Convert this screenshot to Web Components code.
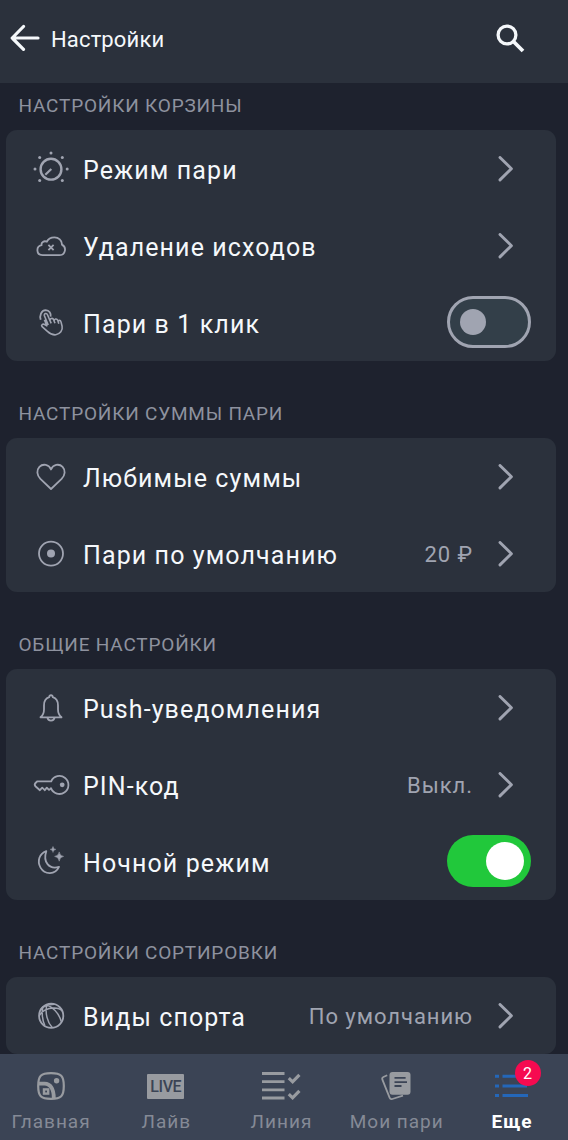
<!DOCTYPE html>
<html lang="ru">
<head>
<meta charset="utf-8">
<meta name="viewport" content="width=device-width, initial-scale=1">
<title>Настройки</title>
<style>
html, body
{
    height: 100%;
    margin: 0;
    overflow: hidden;
}

body
{
    --page: #1e222e;
    --panel: #2b313c;
    --nav: #3b4455;
    --muted: #a0a4b1;
    --heading: #8e929f;
    --white: #f5f8fb;
    --green: #21c83b;
    --red: #f60a50;
    --blue: #2467b9;
    background: var(--page);
    font-family: Roboto, "Noto Sans", sans-serif;
}
</style>
</head>
<body>

<settings-screen>
    <app-header slot="header">Настройки</app-header>

    <settings-group heading="Настройки корзины">
        <settings-row icon="mode">Режим пари<chevron-icon slot="end"></chevron-icon></settings-row>
        <settings-row icon="cloud">Удаление исходов<chevron-icon slot="end"></chevron-icon></settings-row>
        <settings-row icon="tap">Пари в 1 клик<toggle-switch slot="end"></toggle-switch></settings-row>
    </settings-group>

    <settings-group heading="Настройки суммы пари">
        <settings-row icon="heart">Любимые суммы<chevron-icon slot="end"></chevron-icon></settings-row>
        <settings-row icon="target">Пари по умолчанию<span slot="value">20 ₽</span><chevron-icon slot="end"></chevron-icon></settings-row>
    </settings-group>

    <settings-group heading="Общие настройки">
        <settings-row icon="bell">Push-уведомления<chevron-icon slot="end"></chevron-icon></settings-row>
        <settings-row icon="key">PIN-код<span slot="value">Выкл.</span><chevron-icon slot="end"></chevron-icon></settings-row>
        <settings-row icon="moon">Ночной режим<toggle-switch slot="end" on></toggle-switch></settings-row>
    </settings-group>

    <settings-group heading="Настройки сортировки">
        <settings-row icon="ball">Виды спорта<span slot="value">По умолчанию</span><chevron-icon slot="end"></chevron-icon></settings-row>
    </settings-group>

    <nav-bar slot="footer">
        <nav-item icon="home">Главная</nav-item>
        <nav-item icon="live">Лайв</nav-item>
        <nav-item icon="line">Линия</nav-item>
        <nav-item icon="bets">Мои пари</nav-item>
        <nav-item icon="more" badge="2" active>Еще</nav-item>
    </nav-bar>
</settings-screen>

<script>
// row icons share a 38x38 box
const rowIcons = {
    mode: `
        <circle cx="19" cy="19.2" r="10.4" stroke-width="2.4"/>
        <path d="M13.3 24.7 19.3 19" stroke-width="2.2"/>
        <g fill="currentColor" stroke="none">
            <circle cx="19" cy="2.9" r="1.5"/><circle cx="7.7" cy="7.6" r="1.5"/><circle cx="30.3" cy="7.6" r="1.5"/>
            <circle cx="3" cy="19" r="1.5"/><circle cx="35.2" cy="19" r="1.5"/>
            <circle cx="7.7" cy="30.4" r="1.5"/><circle cx="30.3" cy="30.4" r="1.5"/>
        </g>`,
    cloud: `
        <path d="M10.7 28.2H27.5A5.6 5.6 0 0 0 29.9 17.6C30.2 13.3 26.4 10.3 22.5 10.3C18.7 10.3 16 12 14.9 14.7C11.8 13.4 9 15.5 9.6 18.1C3.7 19.3 4 28.1 10.7 28.2Z"/>
        <path d="M16.4 17.9 21.6 23.2M21.6 17.9 16.4 23.2"/>`,
    tap: `
        <path d="M8.7 15.8C7.4 11.8 9 6.3 13.7 6.2C17.3 6.3 19.3 9.3 18.6 12.6" stroke-width="1.8"/>
        <path d="M16.2 21 12.4 11.7C11.7 9.5 14.6 8.6 15.5 10.7L18 16.7C17.5 14.3 20.8 13.4 21.7 15.8L22.1 17C22 14.8 24.9 14.1 25.7 16.3L26.2 17.7C26.2 16 28.5 15.9 29 17.9L30.1 22.3C31 26.4 28 30.1 23.8 30.8C20.2 31.2 17.5 29.2 15.4 27.3L10.1 22.7C8.7 20.9 10.8 19.5 12.6 20.5L14.8 21.8L12.4 15.8M18 16.7 19.2 19.3M22.1 17 23 19.3M26.2 17.7 26.8 19.8" stroke-width="1.6"/>`,
    heart: `<path d="M19 31 8.4 20.9C4.8 17.2 4.3 12.2 7.4 8.9C11 5.2 17 6.5 19 11.5C21 6.5 27 5.2 30.6 8.9C33.7 12.2 33.2 17.2 29.6 20.9Z"/>`,
    target: `
        <circle cx="19" cy="18.6" r="12"/>
        <circle cx="19" cy="18.6" r="4" fill="currentColor" stroke="none"/>`,
    bell: `
        <path d="M17.2 8.2C17 5.6 21 5.6 20.8 8.2C24.3 9.3 26 12.5 26 16.4V20.4C26 23.7 27 26.2 29.5 28.3H8.5C11 26.2 12 23.7 12 20.4V16.4C12 12.5 13.7 9.3 17.2 8.2Z"/>
        <path d="M15.4 28.4C16 32.6 22 32.6 22.6 28.4"/>`,
    key: `
        <path d="M19.2 15.3A9 9 0 1 1 19 22.1C18.2 22.3 18.1 24.4 16.7 23.7L14.8 21.6L12.8 24.2L10.2 21.7L7.9 24.2L3.4 20.3C2.4 19.2 2.6 17.8 4 16.5L5.4 15.3Z"/>
        <circle cx="30.2" cy="18.8" r="2.4" fill="currentColor" stroke="none"/>`,
    moon: `
        <path d="M14.3 8.2C7 10.8 5 18.4 8.5 24.6C12.5 31.4 22.8 32.8 27 23.9C17 26.9 10.7 18.8 14.3 8.2Z"/>
        <g fill="currentColor">
            <path d="M21 3.4Q21.2 6 24 6.4Q21.2 6.7 21 9.5Q20.8 6.7 18 6.4Q20.8 6 21 3.4Z" stroke-width=".4"/>
            <path d="M27.2 8.9Q27.6 12.7 31.6 13.4Q27.6 13.9 27.2 18.2Q26.8 13.9 22.6 13.4Q26.8 12.7 27.2 8.9Z" stroke-width=".5"/>
        </g>`,
    ball: `
        <circle cx="19.2" cy="18.8" r="12.1"/>
        <path d="M14.8 7.6C12.8 16 15.5 25.5 20.2 30.6M14.8 7.6C21.5 11 27.5 17.5 29.2 24.6M7.3 18.6C9.4 14.2 15.3 10.8 22 10.9C26 11 29 12.2 30.6 14.4M22.3 7.2C16 7.4 10.6 9.6 8.7 12.6M10.8 10.4C9.8 16 10.6 23.5 12.8 28.6" stroke-width="1.5"/>`
}

const navIcons = {
    home: `
        <svg width="28" height="28" viewBox="0 0 28 28" fill="none" stroke="currentColor" stroke-width="2.2">
            <path d="M14 1.2C24.2 1.2 26.8 3.8 26.8 14S24.2 26.8 14 26.8S1.2 24.2 1.2 14S3.8 1.2 14 1.2Z"/>
            <path d="M1.4 11.6H7.5Q16.8 12 16.8 26.4" stroke-width="3.8"/>
            <circle cx="19.6" cy="8.8" r="2.7" fill="currentColor" stroke="none"/>
            <rect x="7" y="17.4" width="4.2" height="4.2" stroke-width="2.4"/>
        </svg>`,
    live: `<div class="live">LIVE</div>`,
    line: `
        <svg width="40" height="28" viewBox="0 0 40 28" fill="none" stroke="currentColor" stroke-width="2.8">
            <path d="M1 1.5H23.5M1 9.7H23.5M1 17.9H23.5M1 26H23.5"/>
            <path d="M27.8 6.2 31.6 9.8 38.4 2.8M27.8 22.2 31.6 25.8 38.4 18.8" stroke-width="3.2"/>
        </svg>`,
    bets: `
        <svg width="32" height="30" viewBox="0 0 32 30" fill="none" stroke="currentColor">
            <path d="M7.2 4.3 3.4 6C2.3 6.5 2 7.6 2.4 8.7L9.6 26.7C10.1 28 11 28.4 12.3 28L23 24.7" stroke-width="1.8"/>
            <rect x="9.5" y="1" width="21" height="22.8" rx="3" fill="currentColor" stroke="none"/>
            <path d="M14.5 6.9H25.6M14.5 11.2H27M14.5 15H21.5" stroke="var(--nav)" stroke-width="1.8"/>
        </svg>`,
    more: `
        <svg width="34" height="26" viewBox="0 0 34 26" fill="none" stroke="var(--blue)" stroke-width="3">
            <path d="M0 3.2H4M0 12.9H4M0 22.5H4M7.5 3.2H32M7.5 12.9H32M7.5 22.5H33"/>
        </svg>`
}

class SettingsScreen extends HTMLElement
{
    constructor()
    {
        super()
        this.attachShadow({mode:'open'}).innerHTML = `
        <style>
            :host
            {
                display: flex;
                flex-direction: column;
                height: 100vh;
                background: var(--page);
            }

            main
            {
                flex: 1;
                min-height: 0;
                overflow: hidden;
                display: flex;
                flex-direction: column;
                justify-content: flex-end;
                padding: 0 12px 0 6px;
            }
        </style>
        <slot name="header"></slot>
        <main><slot></slot></main>
        <slot name="footer"></slot>`
    }
}

class AppHeader extends HTMLElement
{
    constructor()
    {
        super()
        this.attachShadow({mode:'open'}).innerHTML = `
        <style>
            :host
            {
                display: flex;
                align-items: center;
                flex: none;
                box-sizing: border-box;
                height: 83px;
                padding: 0 43px 7px 10px;
                background: var(--panel);
                color: var(--white);
            }

            h1
            {
                flex: 1;
                margin: 0 0 0 11px;
                font-size: 22px;
                font-weight: 400;
                letter-spacing: .15px;
                line-height: 30px;
                padding-top: 4px;
            }

            svg
            {
                display: block;
                fill: none;
                stroke: currentColor;
            }
        </style>
        <svg width="30" height="28" viewBox="0 0 30 28" stroke-width="3.2" stroke-linecap="round" stroke-linejoin="round"><path d="M13.5 2.5 2.2 14 13.5 25.3M2.2 14H28"/></svg>
        <h1><slot></slot></h1>
        <svg width="29" height="29" viewBox="0 0 29 29" stroke-width="3.3"><circle cx="11" cy="11" r="8.9"/><path d="M17.5 17.5 27 27" stroke-width="3.8"/></svg>`
    }
}

class SettingsGroup extends HTMLElement
{
    constructor()
    {
        super()
        this.attachShadow({mode:'open'}).innerHTML = `
        <style>
            :host
            {
                display: block;
                flex: none;
            }

            h2
            {
                box-sizing: border-box;
                height: 77px;
                margin: 0;
                padding: 41px 0 0 12.5px;
                color: var(--heading);
                font-size: 19px;
                font-weight: 400;
                letter-spacing: .8px;
                line-height: 24px;
                text-transform: uppercase;
                white-space: nowrap;
            }

            section
            {
                border-radius: 11px;
                background: var(--panel);
            }
        </style>
        <h2></h2>
        <section><slot></slot></section>`
        this.shadowRoot.querySelector('h2').textContent = this.getAttribute('heading')
    }
}

class SettingsRow extends HTMLElement
{
    constructor()
    {
        super()
        this.attachShadow({mode:'open'}).innerHTML = `
        <style>
            :host
            {
                display: flex;
                align-items: center;
                box-sizing: border-box;
                height: 77px;
                padding: 0 25px;
            }

            svg
            {
                flex: none;
                margin-left: .5px;
                color: var(--muted);
                fill: none;
                stroke: currentColor;
                stroke-width: 1.8;
                stroke-linejoin: round;
            }

            .label
            {
                flex: 1;
                margin-left: 13.5px;
                padding-top: 4px;
                color: var(--white);
                font-size: 25px;
                letter-spacing: 1.1px;
                line-height: 32px;
                white-space: nowrap;
            }

            ::slotted(span)
            {
                margin-right: 25px;
                padding-top: 2px;
                color: var(--muted);
                font-size: 22px;
                letter-spacing: .95px;
                white-space: nowrap;
            }
        </style>
        <svg width="38" height="38" viewBox="0 0 38 38">${rowIcons[this.getAttribute('icon')]}</svg>
        <div class="label"><slot></slot></div>
        <slot name="value"></slot>
        <slot name="end"></slot>`
    }
}

class ChevronIcon extends HTMLElement
{
    constructor()
    {
        super()
        this.attachShadow({mode:'open'}).innerHTML = `
        <style>
            :host
            {
                display: block;
                margin-right: 17px;
                color: var(--muted);
            }

            svg
            {
                display: block;
            }
        </style>
        <svg width="16" height="26" viewBox="0 0 16 26" fill="none" stroke="currentColor" stroke-width="2.9" stroke-linecap="round" stroke-linejoin="round"><path d="M2 1.5 13.4 12.7 2 23.9"/></svg>`
    }
}

class ToggleSwitch extends HTMLElement
{
    constructor()
    {
        super()
        this.attachShadow({mode:'open'}).innerHTML = `
        <style>
            :host
            {
                display: flex;
                align-items: center;
                box-sizing: border-box;
                width: 84px;
                height: 52px;
                margin-bottom: 1px;
                padding: 0 10px;
                border: 3px solid var(--muted);
                border-radius: 26px;
                background: #333f49;
            }

            i
            {
                width: 26px;
                height: 26px;
                border-radius: 50%;
                background: var(--muted);
            }

            :host([on])
            {
                justify-content: flex-end;
                padding: 0 7px;
                border: none;
                background: var(--green);
            }

            :host([on]) i
            {
                width: 38px;
                height: 38px;
                background: #fff;
            }
        </style>
        <i></i>`
    }
}

class NavBar extends HTMLElement
{
    constructor()
    {
        super()
        this.attachShadow({mode:'open'}).innerHTML = `
        <style>
            :host
            {
                display: grid;
                grid-template-columns: repeat(5, 115.25px);
                justify-content: center;
                flex: none;
                height: 86px;
                background: var(--nav);
            }
        </style>
        <slot></slot>`
    }
}

class NavItem extends HTMLElement
{
    constructor()
    {
        super()
        this.attachShadow({mode:'open'}).innerHTML = `
        <style>
            :host
            {
                display: flex;
                flex-direction: column;
                align-items: center;
                margin: 0 3px 0 -3px;
                color: #989ba0;
                font-size: 19px;
                letter-spacing: 1px;
                white-space: nowrap;
            }

            .icon
            {
                position: relative;
                display: grid;
                place-items: center;
                height: 30px;
                margin-top: 17px;
            }

            .label
            {
                margin-top: 9px;
                padding-left: 1px;
                line-height: 24px;
                color: #858a96;
            }

            svg
            {
                display: block;
            }

            .live
            {
                width: 37px;
                height: 25px;
                border-radius: 1px;
                background: #989ba0;
                color: var(--nav);
                font: 500 16px/26px Roboto, sans-serif;
                letter-spacing: -.4px;
                text-align: center;
            }

            /* counter sits over the icon's top right corner */
            .badge
            {
                position: absolute;
                top: -11px;
                right: -12px;
                width: 26px;
                height: 26px;
                border-radius: 50%;
                background: var(--red);
                color: #fff;
                font-size: 16px;
                line-height: 27px;
                letter-spacing: 0;
                text-align: center;
            }

            :host([active]) .label
            {
                color: #fff;
                font-weight: 700;
            }
        </style>
        <div class="icon">${navIcons[this.getAttribute('icon')]}</div>
        <div class="label"><slot></slot></div>`

        if (this.hasAttribute('badge'))
        {
            const badge = document.createElement('div')
            badge.className = 'badge'
            badge.textContent = this.getAttribute('badge')
            this.shadowRoot.querySelector('.icon').appendChild(badge)
        }
    }
}

window.customElements.define('settings-screen', SettingsScreen)
window.customElements.define('app-header', AppHeader)
window.customElements.define('settings-group', SettingsGroup)
window.customElements.define('settings-row', SettingsRow)
window.customElements.define('chevron-icon', ChevronIcon)
window.customElements.define('toggle-switch', ToggleSwitch)
window.customElements.define('nav-bar', NavBar)
window.customElements.define('nav-item', NavItem)
</script>
</body>
</html>
